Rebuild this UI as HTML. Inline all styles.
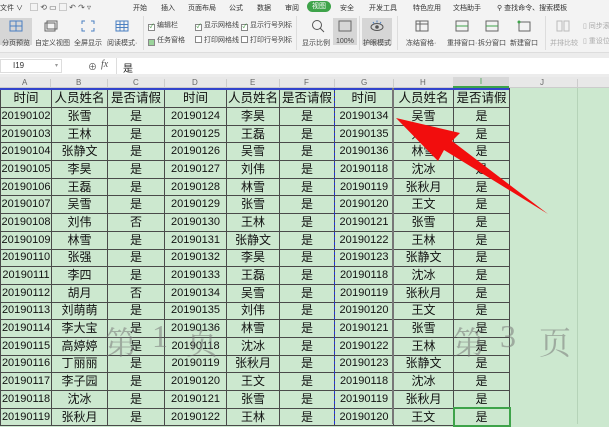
<!DOCTYPE html>
<html><head><meta charset="utf-8"><style>
*{margin:0;padding:0;box-sizing:border-box}
body{width:609px;height:424px;overflow:hidden;background:#cce8cf;font-family:"Liberation Sans","Noto Sans CJK SC",sans-serif;position:relative}
.a{position:absolute;white-space:nowrap}
#top{position:absolute;left:0;top:0;width:609px;height:14px;background:#f3f3f3;font-size:7px;color:#333}
#rib{position:absolute;left:0;top:14px;width:609px;height:39px;background:#f3f3f3;border-bottom:1px solid #ddd;font-size:7px;color:#444}
#gap{position:absolute;left:0;top:53px;width:609px;height:24px;background:#ececec}
#fx{position:absolute;left:0;top:58px;width:609px;height:16px;background:#fff}
#ch{position:absolute;left:0;top:77px;width:609px;height:11px;background:#e8e8e8;font-size:8px;color:#666;border-bottom:1px solid #ccc}
.cb{display:inline-block;width:7px;height:7px;border:1px solid #888;background:#fff;vertical-align:-1px;margin-right:2px;font-size:6px;line-height:5px;text-align:center;color:#2a8a2a;font-style:normal}
table{position:absolute;left:0;top:88px;border-collapse:collapse;table-layout:fixed}
td{border:1px solid #4a4a4a;height:17.7px;text-align:center;font-size:12px;color:#111;overflow:hidden;white-space:nowrap;padding:0;line-height:15px}
td.n{font-size:11px}
tr.h td{height:19px;font-size:12.5px}
.wm{position:absolute;font-size:32px;color:rgba(120,120,120,.55);font-family:"Liberation Serif","Noto Serif CJK SC",serif}
</style></head><body>
<div id="top">
<span class="a" style="left:0;top:3px">文件 ∨</span>
<span class="a" style="left:30px;top:2px;color:#555;font-size:8px">▢ ⟲ ▭ ▢ ↶ ↷ ▿</span>
<span class="a" style="left:133px;top:3px">开始</span>
<span class="a" style="left:161px;top:3px">插入</span>
<span class="a" style="left:188px;top:3px">页面布局</span>
<span class="a" style="left:229px;top:3px">公式</span>
<span class="a" style="left:257px;top:3px">数据</span>
<span class="a" style="left:285px;top:3px">审阅</span>
<span class="a" style="left:307px;top:1px;width:24px;height:11px;background:#3ea34a;border-radius:6px;color:#fff;text-align:center;line-height:11px">视图</span>
<span class="a" style="left:340px;top:3px">安全</span>
<span class="a" style="left:369px;top:3px">开发工具</span>
<span class="a" style="left:413px;top:3px">特色应用</span>
<span class="a" style="left:453px;top:3px">文档助手</span>
<span class="a" style="left:497px;top:3px">⚲ 查找命令、搜索模板</span>
</div>
<div id="rib">
<div class="a" style="left:0;top:4px;width:32px;height:27px;background:#d6d6d6"></div>
<svg class="a" style="left:9px;top:6px" width="14" height="12"><rect x="1" y="1" width="12" height="10" fill="none" stroke="#4a7fc1"/><path d="M7 1v10M1 6h12" stroke="#4a7fc1"/></svg>
<span class="a" style="left:2px;top:24px">分页预览</span>
<svg class="a" style="left:44px;top:6px" width="14" height="12"><rect x="1" y="3" width="10" height="8" fill="none" stroke="#666"/><rect x="3" y="1" width="10" height="8" fill="none" stroke="#666"/></svg>
<span class="a" style="left:35px;top:24px">自定义视图</span>
<svg class="a" style="left:81px;top:6px" width="14" height="12"><path d="M1 4V1h3M10 1h3v3M13 8v3h-3M4 11H1V8" fill="none" stroke="#4a7fc1"/></svg>
<span class="a" style="left:74px;top:24px">全屏显示</span>
<svg class="a" style="left:115px;top:6px" width="14" height="12"><rect x="1" y="1" width="12" height="10" fill="none" stroke="#4a7fc1"/><path d="M5 1v10M9 1v10M1 4.5h12M1 7.5h12" stroke="#4a7fc1"/></svg>
<span class="a" style="left:107px;top:24px">阅读模式·</span>
<div class="a" style="left:143px;top:2px;width:1px;height:34px;background:#ddd"></div>
<span class="a" style="left:148px;top:6px"><i class="cb">✓</i>编辑栏</span>
<span class="a" style="left:148px;top:21px"><i class="cb" style="background:#9bd49b">&nbsp;</i>任务窗格</span>
<span class="a" style="left:195px;top:6px"><i class="cb">✓</i>显示网格线</span>
<span class="a" style="left:195px;top:21px"><i class="cb"></i>打印网格线</span>
<span class="a" style="left:241px;top:6px"><i class="cb">✓</i>显示行号列标</span>
<span class="a" style="left:241px;top:21px"><i class="cb"></i>打印行号列标</span>
<div class="a" style="left:296px;top:2px;width:1px;height:34px;background:#ddd"></div>
<svg class="a" style="left:311px;top:5px" width="14" height="14"><circle cx="6" cy="6" r="4.5" fill="none" stroke="#555"/><path d="M9 9l4 4" stroke="#555"/></svg>
<span class="a" style="left:302px;top:24px">显示比例</span>
<div class="a" style="left:333px;top:4px;width:24px;height:27px;background:#d6d6d6"></div>
<svg class="a" style="left:338px;top:6px" width="14" height="12"><rect x="1" y="1" width="12" height="10" fill="none" stroke="#666"/></svg>
<span class="a" style="left:336px;top:24px">100%</span>
<div class="a" style="left:359px;top:2px;width:1px;height:34px;background:#ddd"></div>
<div class="a" style="left:362px;top:4px;width:30px;height:27px;background:#d6d6d6"></div>
<svg class="a" style="left:369px;top:5px" width="16" height="13"><ellipse cx="8" cy="8" rx="6" ry="3.5" fill="none" stroke="#555"/><circle cx="8" cy="8" r="1.8" fill="#555"/><path d="M4 3l1 1.5M8 1.5v2M12 3l-1 1.5" stroke="#4a7fc1"/></svg>
<span class="a" style="left:363px;top:24px">护眼模式</span>
<div class="a" style="left:397px;top:2px;width:1px;height:34px;background:#ddd"></div>
<svg class="a" style="left:415px;top:6px" width="14" height="12"><rect x="1" y="1" width="12" height="10" fill="none" stroke="#666"/><path d="M1 4h12M5 1v10" stroke="#666"/></svg>
<span class="a" style="left:406px;top:24px">冻结窗格·</span>
<svg class="a" style="left:455px;top:6px" width="14" height="12"><rect x="1" y="1" width="12" height="10" fill="none" stroke="#666"/><path d="M1 6h12" stroke="#3ea34a"/></svg>
<span class="a" style="left:447px;top:24px">重排窗口·</span>
<svg class="a" style="left:485px;top:6px" width="14" height="12"><rect x="1" y="1" width="12" height="10" fill="none" stroke="#666"/><path d="M1 6h12" stroke="#3ea34a"/></svg>
<span class="a" style="left:478px;top:24px">拆分窗口</span>
<svg class="a" style="left:517px;top:6px" width="14" height="12"><rect x="2" y="2" width="11" height="9" fill="none" stroke="#666"/><circle cx="2" cy="2" r="1.5" fill="#3ea34a"/></svg>
<span class="a" style="left:510px;top:24px">新建窗口</span>
<div class="a" style="left:545px;top:2px;width:1px;height:34px;background:#ddd"></div>
<svg class="a" style="left:556px;top:6px" width="14" height="12"><rect x="1" y="1" width="5" height="10" fill="none" stroke="#bbb"/><rect x="8" y="1" width="5" height="10" fill="none" stroke="#bbb"/></svg>
<span class="a" style="left:550px;top:24px;color:#aaa">并排比较</span>
<span class="a" style="left:583px;top:7px;color:#aaa">▯ 同步滚</span>
<span class="a" style="left:583px;top:22px;color:#aaa">▯ 重设位</span>
</div>
<div id="gap"></div>
<div id="fx">
<div class="a" style="left:0;top:1px;width:62px;height:14px;border:1px solid #ddd;font-size:8px;color:#333;padding-left:12px;line-height:12px">I19<span style="position:absolute;right:3px;color:#999;font-size:6px">▾</span></div>
<span class="a" style="left:88px;top:2px;font-size:9px;color:#555">⊕</span>
<span class="a" style="left:101px;top:1px;font-size:10px;color:#555;font-style:italic;font-family:'Liberation Serif',serif">fx</span>
<div class="a" style="left:116px;top:0;width:1px;height:16px;background:#ddd"></div>
<span class="a" style="left:123px;top:2px;font-size:10px;color:#222">是</span>
</div>
<div id="ch">
<span class="a" style="left:22px;top:1px">A</span><span class="a" style="left:76px;top:1px">B</span><span class="a" style="left:133px;top:1px">C</span><span class="a" style="left:192px;top:1px">D</span><span class="a" style="left:250px;top:1px">E</span><span class="a" style="left:304px;top:1px">F</span><span class="a" style="left:361px;top:1px">G</span><span class="a" style="left:420px;top:1px">H</span>
<div class="a" style="left:453px;top:0;width:56px;height:11px;background:#d8d8d8;border-bottom:2px solid #3ea34a;text-align:center;color:#3ea34a">I</div>
<span class="a" style="left:540px;top:1px">J</span>
<div class="a" style="left:50px;top:2px;width:1px;height:8px;background:#ccc"></div>
<div class="a" style="left:107px;top:2px;width:1px;height:8px;background:#ccc"></div>
<div class="a" style="left:164px;top:2px;width:1px;height:8px;background:#ccc"></div>
<div class="a" style="left:226px;top:2px;width:1px;height:8px;background:#ccc"></div>
<div class="a" style="left:279px;top:2px;width:1px;height:8px;background:#ccc"></div>
<div class="a" style="left:334px;top:2px;width:1px;height:8px;background:#ccc"></div>
<div class="a" style="left:393px;top:2px;width:1px;height:8px;background:#ccc"></div>
<div class="a" style="left:577px;top:2px;width:1px;height:8px;background:#ccc"></div>
</div>
<div class="a" style="left:577px;top:88px;width:1px;height:336px;background:#b5d3b8"></div>
<table>
<colgroup><col style="width:51px"><col style="width:56px"><col style="width:57px"><col style="width:62px"><col style="width:53px"><col style="width:55px"><col style="width:59px"><col style="width:60px"><col style="width:56px"></colgroup>
<tr class="h"><td>时间</td><td>人员姓名</td><td>是否请假</td><td>时间</td><td>人员姓名</td><td>是否请假</td><td>时间</td><td>人员姓名</td><td>是否请假</td></tr>
<tr><td class="n">20190102</td><td>张雪</td><td>是</td><td class="n">20190124</td><td>李昊</td><td>是</td><td class="n">20190134</td><td>吴雪</td><td>是</td></tr>
<tr><td class="n">20190103</td><td>王林</td><td>是</td><td class="n">20190125</td><td>王磊</td><td>是</td><td class="n">20190135</td><td>刘伟</td><td>是</td></tr>
<tr><td class="n">20190104</td><td>张静文</td><td>是</td><td class="n">20190126</td><td>吴雪</td><td>是</td><td class="n">20190136</td><td>林雪</td><td>是</td></tr>
<tr><td class="n">20190105</td><td>李昊</td><td>是</td><td class="n">20190127</td><td>刘伟</td><td>是</td><td class="n">20190118</td><td>沈冰</td><td>是</td></tr>
<tr><td class="n">20190106</td><td>王磊</td><td>是</td><td class="n">20190128</td><td>林雪</td><td>是</td><td class="n">20190119</td><td>张秋月</td><td>是</td></tr>
<tr><td class="n">20190107</td><td>吴雪</td><td>是</td><td class="n">20190129</td><td>张雪</td><td>是</td><td class="n">20190120</td><td>王文</td><td>是</td></tr>
<tr><td class="n">20190108</td><td>刘伟</td><td>否</td><td class="n">20190130</td><td>王林</td><td>是</td><td class="n">20190121</td><td>张雪</td><td>是</td></tr>
<tr><td class="n">20190109</td><td>林雪</td><td>是</td><td class="n">20190131</td><td>张静文</td><td>是</td><td class="n">20190122</td><td>王林</td><td>是</td></tr>
<tr><td class="n">20190110</td><td>张强</td><td>是</td><td class="n">20190132</td><td>李昊</td><td>是</td><td class="n">20190123</td><td>张静文</td><td>是</td></tr>
<tr><td class="n">20190111</td><td>李四</td><td>是</td><td class="n">20190133</td><td>王磊</td><td>是</td><td class="n">20190118</td><td>沈冰</td><td>是</td></tr>
<tr><td class="n">20190112</td><td>胡月</td><td>否</td><td class="n">20190134</td><td>吴雪</td><td>是</td><td class="n">20190119</td><td>张秋月</td><td>是</td></tr>
<tr><td class="n">20190113</td><td>刘萌萌</td><td>是</td><td class="n">20190135</td><td>刘伟</td><td>是</td><td class="n">20190120</td><td>王文</td><td>是</td></tr>
<tr><td class="n">20190114</td><td>李大宝</td><td>是</td><td class="n">20190136</td><td>林雪</td><td>是</td><td class="n">20190121</td><td>张雪</td><td>是</td></tr>
<tr><td class="n">20190115</td><td>高婷婷</td><td>是</td><td class="n">20190118</td><td>沈冰</td><td>是</td><td class="n">20190122</td><td>王林</td><td>是</td></tr>
<tr><td class="n">20190116</td><td>丁丽丽</td><td>是</td><td class="n">20190119</td><td>张秋月</td><td>是</td><td class="n">20190123</td><td>张静文</td><td>是</td></tr>
<tr><td class="n">20190117</td><td>李子园</td><td>是</td><td class="n">20190120</td><td>王文</td><td>是</td><td class="n">20190118</td><td>沈冰</td><td>是</td></tr>
<tr><td class="n">20190118</td><td>沈冰</td><td>是</td><td class="n">20190121</td><td>张雪</td><td>是</td><td class="n">20190119</td><td>张秋月</td><td>是</td></tr>
<tr><td class="n">20190119</td><td>张秋月</td><td>是</td><td class="n">20190122</td><td>王林</td><td>是</td><td class="n">20190120</td><td>王文</td><td style="border:2px solid #3ea34a">是</td></tr>
</table>
<div class="a" style="left:0;top:88px;width:509px;height:2px;background:#3344cc"></div>
<div class="a" style="left:334px;top:88px;height:336px;border-left:1.5px dashed #2233dd"></div>
<div class="a" style="left:392px;top:88px;width:2px;height:336px;background:#777"></div>
<span class="wm" style="left:105px;top:318px">第</span>
<span class="wm" style="left:152px;top:318px">1</span>
<span class="wm" style="left:186px;top:318px">页</span>
<span class="wm" style="left:453px;top:318px">第</span>
<span class="wm" style="left:500px;top:318px">3</span>
<span class="wm" style="left:539px;top:318px">页</span>
<svg class="a" style="left:0;top:0" width="609" height="424"><polygon points="396,118 460,133 452,141 548,214 444,150 438,161" fill="#f20d0d"/></svg>
</body></html>
